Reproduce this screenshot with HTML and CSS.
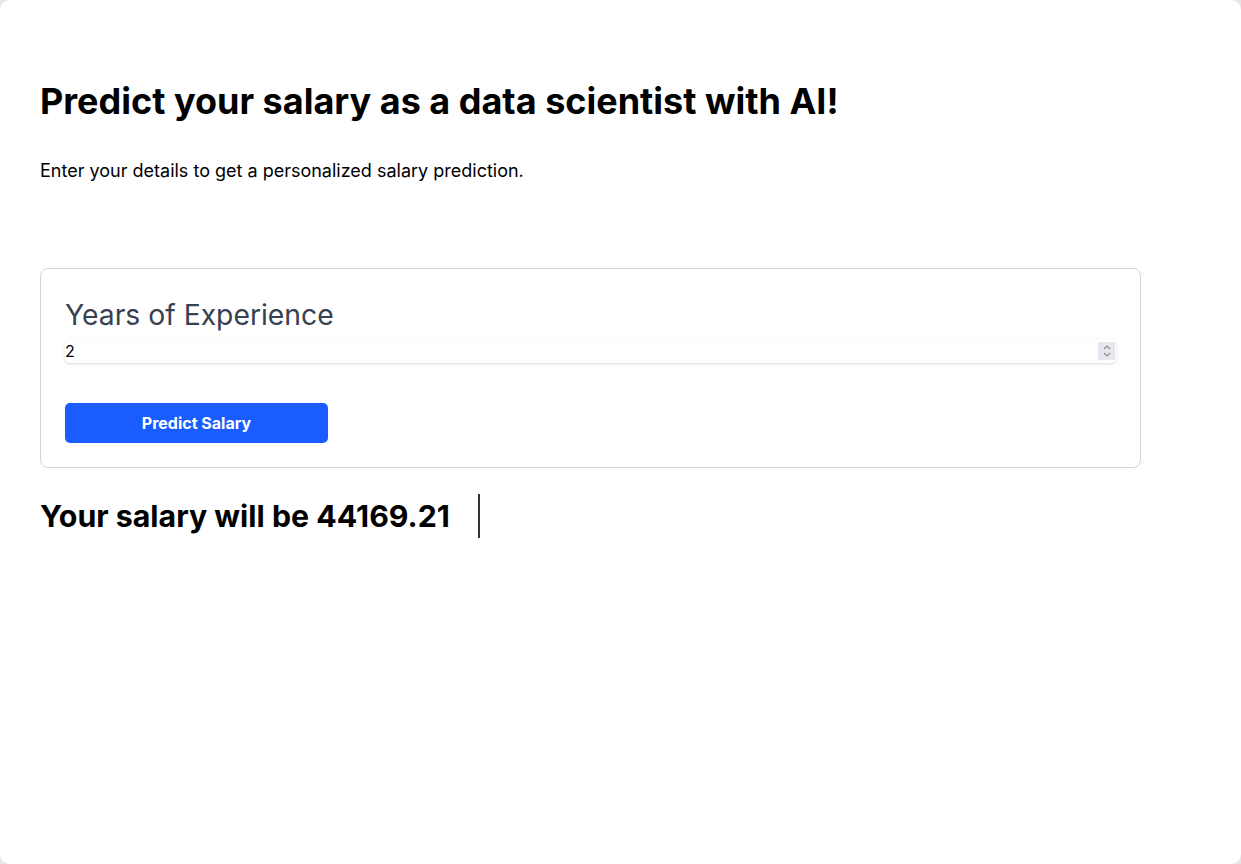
FILE: index.html
```html
<!DOCTYPE html>
<html>
<head>
<meta charset="utf-8">
<link rel="stylesheet" href="styles.css">
</head>
<body>
<div class="app">
  <h1 class="title">Predict your salary as a data scientist with AI!</h1>
  <p class="subtitle">Enter your details to get a personalized salary prediction.</p>
  <div class="card">
    <label class="label" for="years">Years of Experience</label>
    <div class="input-wrap">
      <input id="years" class="input" type="number" value="2">
      <span class="spin">
        <svg width="10" height="14" viewBox="0 0 10 14"><path d="M2 5 L5 2 L8 5 M2 9 L5 12 L8 9" fill="none" stroke="#8b8b95" stroke-width="1.2"/></svg>
      </span>
    </div>
    <button class="btn">Predict Salary</button>
  </div>
  <div class="result">
    <h2 class="result-text">Your salary will be 44169.21</h2>
    <span class="divider"></span>
  </div>
</div>
</body>
</html>
```
FILE: styles.css
```css
html, body {
  margin: 0;
  padding: 0;
  height: 100%;
  background: #e6e6e6;
}
body {
  font-family: Inter, "Noto Sans", sans-serif;
  color: #000;
}
.app {
  box-sizing: border-box;
  height: 864px;
  background: #fff;
  border-radius: 10px;
  padding: 80px 40px 0 40px;
}
.title {
  margin: 0;
  font-size: 36px;
  font-weight: 700;
  line-height: 42px;
}
.subtitle {
  margin: 37px 0 0 0;
  font-size: 18px;
  line-height: 24px;
}
.card {
  margin-top: 85px;
  width: 1101px;
  box-sizing: border-box;
  border: 1px solid #d1d5db;
  border-radius: 8px;
  padding: 28px 24px 24px 24px;
}
.label {
  display: block;
  font-size: 28.3px;
  color: #374151;
  line-height: 36px;
}
.input-wrap {
  position: relative;
  margin-top: 6px;
  height: 24px;
  border-radius: 5px;
  box-shadow: 0 1px 3px rgba(0,0,0,0.15);
  background: #fff;
}
.input {
  box-sizing: border-box;
  width: 100%;
  height: 24px;
  border: none;
  outline: none;
  padding: 0;
  margin: 0;
  background: transparent;
  font-family: Inter, "Noto Sans", sans-serif;
  font-size: 16px;
  color: #000;
  -moz-appearance: textfield;
}
.input::-webkit-inner-spin-button,
.input::-webkit-outer-spin-button {
  -webkit-appearance: none;
  margin: 0;
}
.spin {
  position: absolute;
  right: 1px;
  top: 3px;
  width: 17px;
  height: 18px;
  background: #e6e6ec;
  display: flex;
  align-items: center;
  justify-content: center;
}
.btn {
  display: block;
  margin-top: 40px;
  width: 263px;
  height: 40px;
  border: none;
  border-radius: 5px;
  background: #195cff;
  color: #fff;
  font-family: Inter, "Noto Sans", sans-serif;
  font-size: 16px;
  font-weight: 700;
}
.result {
  margin-top: 26px;
  display: flex;
  align-items: center;
  gap: 28px;
}
.result-text {
  margin: 0;
  font-size: 30.3px;
  font-weight: 700;
  line-height: 44px;
}
.divider {
  width: 2px;
  height: 44px;
  background: #333;
}
```
